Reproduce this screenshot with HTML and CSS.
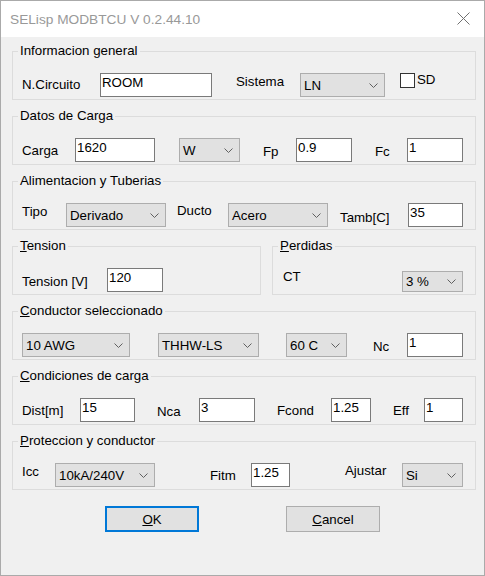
FILE: index.html
```html
<!DOCTYPE html>
<html lang="es">
<head>
<meta charset="utf-8">
<title>SELisp MODBTCU</title>
<link rel="stylesheet" href="styles.css">
</head>
<body>
<div class="window">
  <div class="titlebar">
    <span class="title">SELisp MODBTCU V 0.2.44.10</span>
    <svg class="close" width="13" height="13" viewBox="0 0 13 13"><path d="M0.5 0.5 L12.5 12.5 M12.5 0.5 L0.5 12.5" stroke="#707070" stroke-width="1" fill="none"/></svg>
  </div>
  <div class="client">
    <div class="group">
      <div class="legend">Informacion general</div>
      <div class="row">
        <span class="lbl w78 mt4">N.Circuito</span>
        <span class="tb w112">ROOM</span>
        <span class="lbl ml24 w64 mt1">Sistema</span>
        <span class="cb w85">LN<svg width="9" height="5" viewBox="0 0 9 5"><polyline points="0.5,0.5 4.5,4.5 8.5,0.5" fill="none" stroke="#606060"/></svg></span>
        <span class="chk ml15"></span>
        <span class="lbl ml2 mtm1">SD</span>
      </div>
    </div>

    <div class="group">
      <div class="legend">Datos de Carga</div>
      <div class="row">
        <span class="lbl w53 mt5">Carga</span>
        <span class="tb w80">1620</span>
        <span class="cb ml24 w61">W<svg width="9" height="5" viewBox="0 0 9 5"><polyline points="0.5,0.5 4.5,4.5 8.5,0.5" fill="none" stroke="#606060"/></svg></span>
        <span class="lbl ml23 w33 mt6">Fp</span>
        <span class="tb w56">0.9</span>
        <span class="lbl ml23 w32 mt6">Fc</span>
        <span class="tb w56">1</span>
      </div>
    </div>

    <div class="group">
      <div class="legend">Alimentacion y Tuberias</div>
      <div class="row">
        <span class="lbl w44 mt1">Tipo</span>
        <span class="cb w100">Derivado<svg width="9" height="5" viewBox="0 0 9 5"><polyline points="0.5,0.5 4.5,4.5 8.5,0.5" fill="none" stroke="#606060"/></svg></span>
        <span class="lbl ml11 w51">Ducto</span>
        <span class="cb w100">Acero<svg width="9" height="5" viewBox="0 0 9 5"><polyline points="0.5,0.5 4.5,4.5 8.5,0.5" fill="none" stroke="#606060"/></svg></span>
        <span class="lbl ml12 w68 mt7">Tamb[C]</span>
        <span class="tb w55">35</span>
      </div>
    </div>

    <div class="pair">
      <div class="group g-tension">
        <div class="legend"><u>T</u>ension</div>
        <div class="row">
          <span class="lbl w85 mt6">Tension [V]</span>
          <span class="tb w56">120</span>
        </div>
      </div>
      <div class="group g-perdidas">
        <div class="legend"><u>P</u>erdidas</div>
        <div class="row row-ct">
          <span class="lbl w119 mt1">CT</span>
          <span class="cb w61 cb-short">3 %<svg width="9" height="5" viewBox="0 0 9 5"><polyline points="0.5,0.5 4.5,4.5 8.5,0.5" fill="none" stroke="#606060"/></svg></span>
        </div>
      </div>
    </div>

    <div class="group">
      <div class="legend"><u>C</u>onductor seleccionado</div>
      <div class="row">
        <span class="cb w108">10 AWG<svg width="9" height="5" viewBox="0 0 9 5"><polyline points="0.5,0.5 4.5,4.5 8.5,0.5" fill="none" stroke="#606060"/></svg></span>
        <span class="cb ml28 w101">THHW-LS<svg width="9" height="5" viewBox="0 0 9 5"><polyline points="0.5,0.5 4.5,4.5 8.5,0.5" fill="none" stroke="#606060"/></svg></span>
        <span class="cb ml27 w61">60 C<svg width="9" height="5" viewBox="0 0 9 5"><polyline points="0.5,0.5 4.5,4.5 8.5,0.5" fill="none" stroke="#606060"/></svg></span>
        <span class="lbl ml26 w34 mt6">Nc</span>
        <span class="tb w56">1</span>
      </div>
    </div>

    <div class="group">
      <div class="legend"><u>C</u>ondiciones de carga</div>
      <div class="row">
        <span class="lbl w58 mt5">Dist[m]</span>
        <span class="tb w55">15</span>
        <span class="lbl ml22 w42 mt6">Nca</span>
        <span class="tb w56">3</span>
        <span class="lbl ml22 w54 mt5">Fcond</span>
        <span class="tb w40">1.25</span>
        <span class="lbl ml22 w31 mt5">Eff</span>
        <span class="tb w39">1</span>
      </div>
    </div>

    <div class="group">
      <div class="legend"><u>P</u>roteccion y conductor</div>
      <div class="row">
        <span class="lbl w33 mt1">Icc</span>
        <span class="cb w100">10kA/240V<svg width="9" height="5" viewBox="0 0 9 5"><polyline points="0.5,0.5 4.5,4.5 8.5,0.5" fill="none" stroke="#606060"/></svg></span>
        <span class="lbl ml55 w41 mt5">Fitm</span>
        <span class="tb w39">1.25</span>
        <span class="lbl ml55 w57">Ajustar</span>
        <span class="cb w61">Si<svg width="9" height="5" viewBox="0 0 9 5"><polyline points="0.5,0.5 4.5,4.5 8.5,0.5" fill="none" stroke="#606060"/></svg></span>
      </div>
    </div>

    <div class="buttons">
      <button class="btn btn-default"><u>O</u>K</button>
      <button class="btn btn-cancel"><u>C</u>ancel</button>
    </div>
  </div>
</div>
</body>
</html>
```

FILE: styles.css
```css
html, body {
  margin: 0;
  padding: 0;
  background: #f0f0f0;
}

body {
  font-family: "Liberation Sans", Arial, sans-serif;
  font-size: 13.3px;
  color: #000;
}

.window {
  box-sizing: border-box;
  width: 485px;
  height: 576px;
  border: 1px solid #aaaaaa;
  background: #f0f0f0;
  display: flex;
  flex-direction: column;
}

.titlebar {
  height: 36px;
  flex: none;
  background: #ffffff;
  display: flex;
  align-items: center;
  padding-left: 9px;
  padding-top: 2px;
  box-sizing: border-box;
}

.title {
  font-size: 13.7px;
  line-height: 16px;
  color: #999999;
}

.close {
  margin-left: auto;
  margin-right: 14px;
  margin-top: -3px;
}

.client {
  flex: 1;
  padding: 14px 8px 0 11px;
}

.group {
  box-sizing: border-box;
  height: 49px;
  border: 1px solid #dcdcdc;
  margin-bottom: 16px;
}

.legend {
  width: fit-content;
  height: 15px;
  line-height: 15px;
  margin: -9px 0 0 5px;
  padding: 0 2px;
  background: #f0f0f0;
  white-space: nowrap;
}

.legend u, .btn u {
  text-decoration-thickness: 1px;
  text-underline-offset: 1px;
}

.row {
  display: flex;
  align-items: flex-start;
  height: 24px;
  margin-top: 15px;
  padding-left: 9px;
}

.pair {
  display: flex;
  gap: 11px;
}

.g-tension {
  width: 249px;
}

.g-perdidas {
  width: 204px;
}

.row-ct {
  padding-left: 10px;
}

.lbl {
  flex: none;
  line-height: 15px;
  white-space: nowrap;
}

.tb {
  flex: none;
  box-sizing: border-box;
  height: 24px;
  border: 1px solid #7a7a7a;
  background: #ffffff;
  padding: 1px 1px 0 1px;
  line-height: 15px;
  white-space: nowrap;
  overflow: hidden;
}

.cb {
  flex: none;
  box-sizing: border-box;
  height: 24px;
  border: 1px solid #adadad;
  background: #e1e1e1;
  display: flex;
  align-items: center;
  padding-left: 3px;
  line-height: 15px;
  white-space: nowrap;
}

.cb svg {
  margin-left: auto;
  margin-right: 6px;
  flex: none;
}

.cb-short {
  height: 21px;
  margin-top: 3px;
}

.chk {
  flex: none;
  box-sizing: border-box;
  width: 15px;
  height: 15px;
  border: 1px solid #333333;
  background: #ffffff;
}

/* widths */
.w31 { width: 31px; }
.w32 { width: 32px; }
.w33 { width: 33px; }
.w34 { width: 34px; }
.w39 { width: 39px; }
.w40 { width: 40px; }
.w41 { width: 41px; }
.w42 { width: 42px; }
.w44 { width: 44px; }
.w51 { width: 51px; }
.w53 { width: 53px; }
.w54 { width: 54px; }
.w55 { width: 55px; }
.w56 { width: 56px; }
.w57 { width: 57px; }
.w58 { width: 58px; }
.w61 { width: 61px; }
.w64 { width: 64px; }
.w68 { width: 68px; }
.w78 { width: 78px; }
.w80 { width: 80px; }
.w85 { width: 85px; }
.w100 { width: 100px; }
.w101 { width: 101px; }
.w108 { width: 108px; }
.w112 { width: 112px; }
.w119 { width: 119px; }

/* horizontal gaps */
.ml2 { margin-left: 2px; }
.ml11 { margin-left: 11px; }
.ml12 { margin-left: 12px; }
.ml15 { margin-left: 15px; }
.ml22 { margin-left: 22px; }
.ml23 { margin-left: 23px; }
.ml24 { margin-left: 24px; }
.ml26 { margin-left: 26px; }
.ml27 { margin-left: 27px; }
.ml28 { margin-left: 28px; }
.ml55 { margin-left: 55px; }

/* label vertical offsets */
.mtm1 { margin-top: -1px; }
.mt1 { margin-top: 1px; }
.mt4 { margin-top: 4px; }
.mt5 { margin-top: 5px; }
.mt6 { margin-top: 6px; }
.mt7 { margin-top: 7px; }

.buttons {
  display: flex;
  margin-top: 9px;
  padding-left: 93px;
  gap: 87px;
}

.btn {
  box-sizing: border-box;
  width: 94px;
  height: 26px;
  background: #e1e1e1;
  font-family: "Liberation Sans", Arial, sans-serif;
  font-size: 13.3px;
  line-height: 15px;
  color: #000;
  padding: 0;
  margin: 0;
}

.btn-default {
  border: 2px solid #0078d7;
}

.btn-cancel {
  border: 1px solid #adadad;
}
```
